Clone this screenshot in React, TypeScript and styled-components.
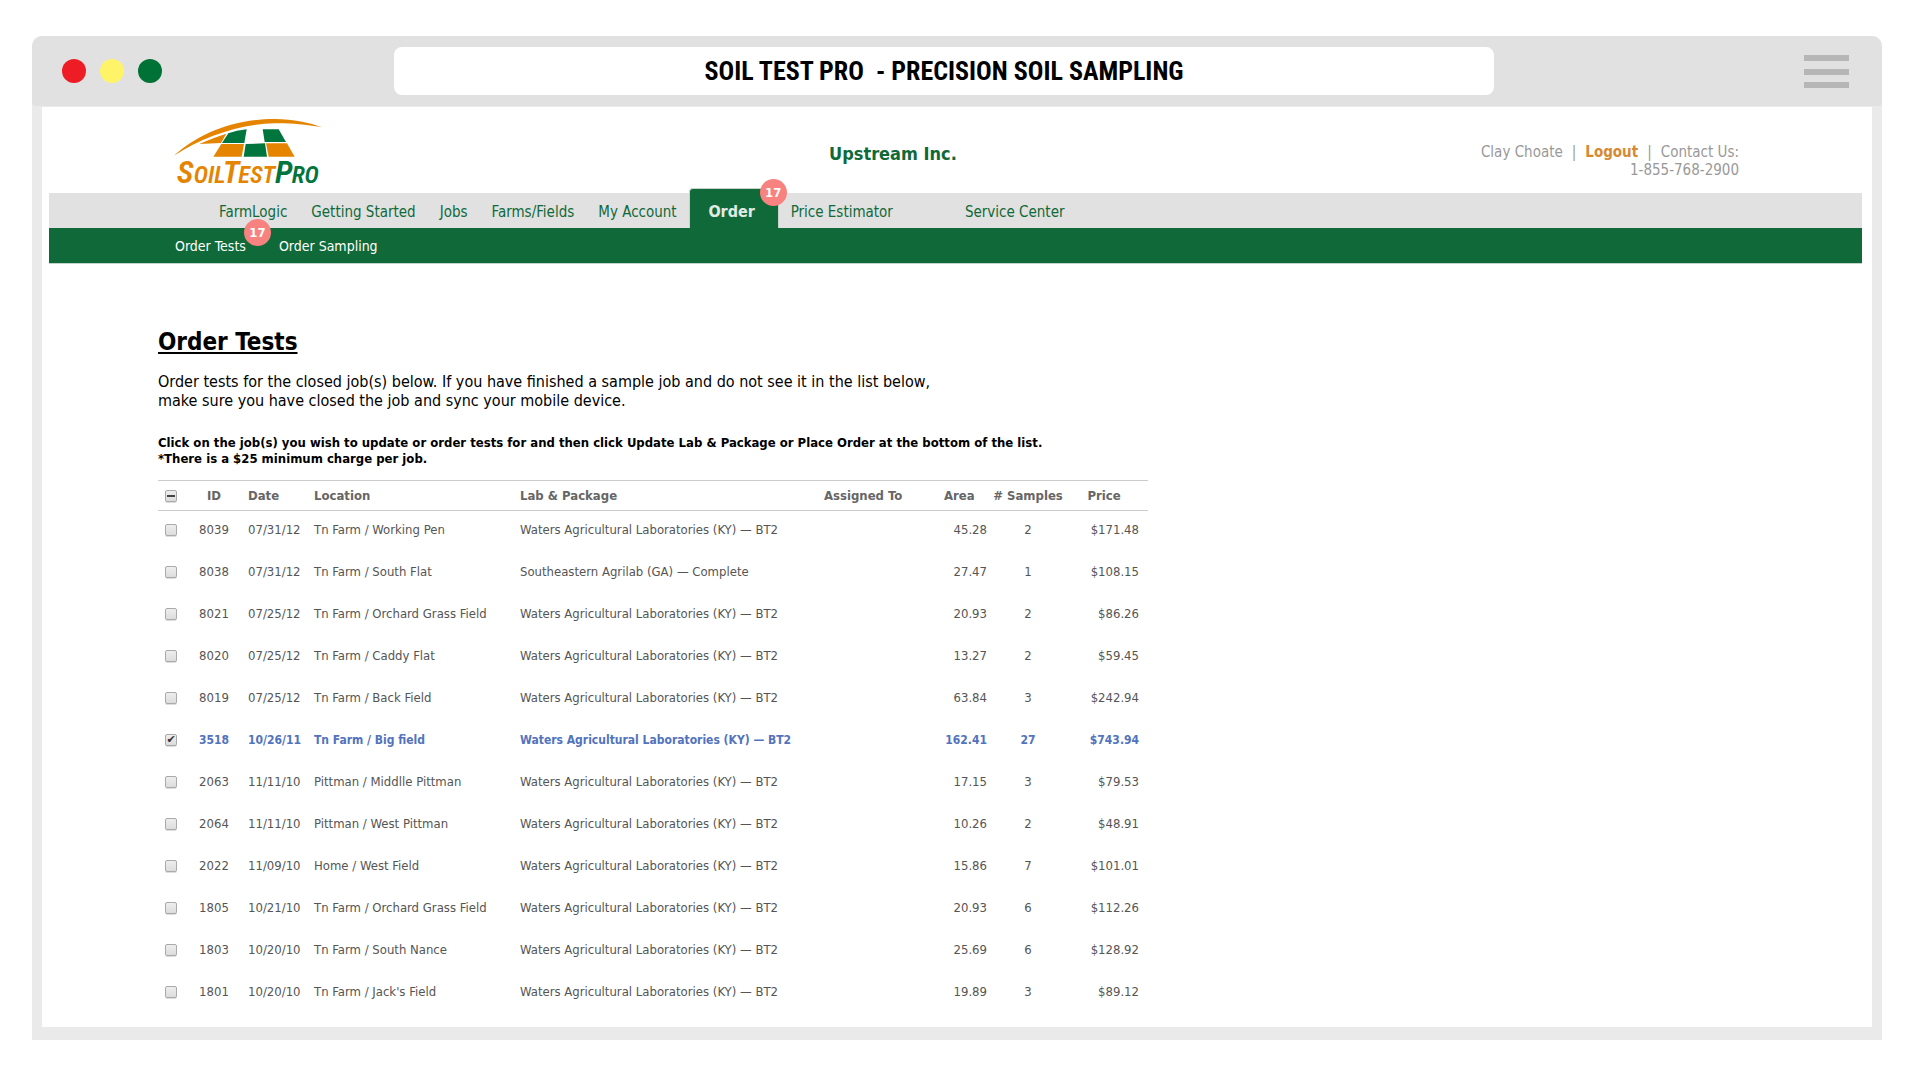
import React, { useEffect, useRef, useState } from "react";
import styled, { createGlobalStyle } from "styled-components";

const GREEN = "#106938";
const CHROME = "#e1e1e1";

const GlobalStyle = createGlobalStyle`
  * { box-sizing: border-box; }
  body {
    margin: 0;
    background: #fff;
    font-family: "DejaVu Sans Condensed", "DejaVu Sans", sans-serif;
  }
  a { color: inherit; text-decoration: none; }
`;

const Frame = styled.div`
  margin: 36px 38px 40px 32px;
  padding-bottom: 13px;
  background: #eaeaea;
  border-radius: 10px 10px 0 0;
`;

const TitleBar = styled.header`
  display: grid;
  grid-template-columns: 332px minmax(0, 1fr) 355px;
  align-items: center;
  height: 70px;
  padding: 0 33px 0 30px;
  background: ${CHROME};
  border-radius: 10px 10px 4px 4px;
`;

const Dots = styled.div`
  display: flex;
  gap: 14px;
`;

const Dot = styled.span<{ $color: string }>`
  width: 24px;
  height: 24px;
  border-radius: 50%;
  background: ${(p) => p.$color};
`;

const AddressBar = styled.div`
  display: flex;
  align-items: center;
  justify-content: center;
  height: 48px;
  background: #fff;
  border-radius: 8px;
  color: #000;
  font: 700 26px/32px "Roboto Condensed", Roboto, sans-serif;
  white-space: pre;
`;

const MenuButton = styled.button`
  justify-self: end;
  display: block;
  padding: 0;
  border: 0;
  background: none;
  svg { display: block; }
`;

const Page = styled.main`
  margin: 1px 10px 0;
  background: #fff;
`;

const SiteHeader = styled.div`
  display: grid;
  grid-template-columns: 655px auto 1fr;
  height: 86px;
  padding: 0 133px 0 132px;
`;

const LogoLink = styled.a`
  justify-self: start;
  padding-top: 11px;
  svg { display: block; margin-left: -1px; }
`;

const Company = styled.div`
  padding-top: 35px;
  color: ${GREEN};
  font-size: 18px;
  font-weight: 700;
  line-height: 24px;
`;

const Contact = styled.div`
  padding-top: 36px;
  color: #999;
  font-size: 15px;
  line-height: 18px;
  text-align: right;
`;

const Separator = styled.span`
  margin: 0 9px;
`;

const Logout = styled.a`
  color: #d68a33;
  font-weight: 700;
`;

const Bars = styled.div`
  margin: 0 10px 0 7px;
`;

const Nav = styled.nav`
  display: flex;
  height: 35px;
  padding-left: 158px;
  background: ${CHROME};
  color: ${GREEN};
  font-size: 15px;
  line-height: 38px;
`;

const NavItem = styled.a<{ $spaced?: boolean }>`
  padding: 0 12px;
  margin-left: ${(p) => (p.$spaced ? 48 : 0)}px;
  white-space: nowrap;
`;

const ActiveTab = styled.a`
  position: relative;
  width: 90px;
  height: 40px;
  margin-top: -5px;
  padding-top: 4px;
  border: 1px solid #c9d3cc;
  border-bottom: 0;
  border-radius: 4px 4px 0 0;
  background: ${GREEN};
  color: #e1ebe4;
  font-size: 16px;
  font-weight: 700;
  text-align: center;
  text-indent: -4px;
`;

const SubNav = styled.nav`
  display: flex;
  gap: 33px;
  height: 36px;
  padding-left: 126px;
  border-bottom: 1px solid #c3d3c9;
  background: ${GREEN};
  color: #fff;
  font-size: 14px;
  line-height: 36px;
`;

const SubNavItem = styled.a`
  position: relative;
`;

const Badge = styled.span`
  position: absolute;
  top: -9px;
  right: -25px;
  width: 27px;
  height: 27px;
  border-radius: 50%;
  background: #f88280;
  color: #fff;
  font-size: 13px;
  font-weight: 700;
  line-height: 27px;
  text-align: center;
  text-indent: 0;
`;

const TabBadge = styled(Badge)`
  top: -10px;
  right: -9px;
`;

const Content = styled.section`
  max-width: 1106px;
  padding: 62px 0 12px 116px;
`;

const Heading = styled.h1`
  margin: 0;
  font-size: 24px;
  line-height: 32px;
  text-decoration: underline;
  text-decoration-thickness: 2px;
  text-underline-offset: 2px;
  text-decoration-skip-ink: none;
`;

const Intro = styled.p`
  margin: 14px 0 0;
  font-size: 16px;
  line-height: 19px;
`;

const Note = styled.p`
  margin: 25px 0 0;
  font-size: 13px;
  font-weight: 700;
  line-height: 16px;
`;

const Table = styled.table`
  width: 100%;
  margin-top: 13px;
  border-collapse: separate;
  border-spacing: 0;
  table-layout: fixed;
  color: #555;
  font-size: 13px;
  line-height: 18px;
`;

type Align = "left" | "center" | "right";

const Th = styled.th<{ $align: Align; $end?: number }>`
  height: 31px;
  padding: 0 ${(p) => p.$end || 0}px 0 0;
  border-top: 1px solid #ccc;
  border-bottom: 1px solid #ccc;
  color: #666;
  text-align: ${(p) => p.$align};
  white-space: nowrap;
`;

const Td = styled.td<{ $align: Align; $end?: number }>`
  height: 42px;
  padding: 10px ${(p) => p.$end || 0}px 0 0;
  text-align: ${(p) => p.$align};
  vertical-align: top;
  white-space: nowrap;
`;

const CheckCell = styled(Td)`
  padding-top: 13px;
`;

const Row = styled.tr<{ $selected: boolean }>`
  color: ${(p) => (p.$selected ? "#5273bd" : "inherit")};
  font-size: ${(p) => (p.$selected ? 12 : 13)}px;
  font-weight: ${(p) => (p.$selected ? 700 : 400)};
`;

const Check = styled.input`
  appearance: none;
  display: block;
  width: 12px;
  height: 12px;
  margin: 0 0 0 7px;
  border: 1px solid #aaa;
  border-radius: 2px;
  background: linear-gradient(#eee, #dcdcdc);
  box-shadow: 0 1px 0 #ddd;
  &:checked::after {
    content: "✔";
    display: block;
    color: #333;
    font: 11px/10px "DejaVu Sans", sans-serif;
    text-align: center;
  }
  &:indeterminate::after {
    content: "";
    display: block;
    width: 8px;
    height: 2px;
    margin: 4px 1px;
    background: #444;
  }
`;

const Logo = () => (
  <svg width="150" height="74" viewBox="39 36 450 222" role="img" aria-label="Soil Test Pro">
    <g fill="#e58400">
      <path d="M42 149 C110 88 210 39 345 39 C400 40 450 50 486 64 C430 55 390 51 345 52 C240 54 130 92 42 149Z" />
      <path d="M118 114 Q165 93 199 83 L183 111Z" />
      <path d="M184 114 H252 L245 152 H160Z" />
      <path d="M318 112 H381 L404 152 H326Z" />
    </g>
    <g fill="#00753d">
      <path d="M205 82 Q230 73 260 70 L253 111 H186Z" />
      <path d="M257 114 L315 112 L321 152 H251Z" />
      <path d="M308 70 H356 L378 108 H314Z" />
    </g>
    <g fontFamily="Roboto Condensed, Roboto, sans-serif" fontWeight="600" fontStyle="italic">
      <text y="230" fill="#e58400">
        <tspan x="50" fontSize="96">S</tspan>
        <tspan x="101" fontSize="73">OIL</tspan>
        <tspan x="188" fontSize="96">T</tspan>
        <tspan x="235" fontSize="73">EST</tspan>
      </text>
      <text y="230" fill="#00753d">
        <tspan x="345" fontSize="96">P</tspan>
        <tspan x="395" fontSize="73">RO</tspan>
      </text>
    </g>
  </svg>
);

const WATERS = "Waters Agricultural Laboratories (KY) — BT2";

const JOBS = [
  ["8039", "07/31/12", "Tn Farm / Working Pen", WATERS, "45.28", "2", "$171.48"],
  ["8038", "07/31/12", "Tn Farm / South Flat", "Southeastern Agrilab (GA) — Complete", "27.47", "1", "$108.15"],
  ["8021", "07/25/12", "Tn Farm / Orchard Grass Field", WATERS, "20.93", "2", "$86.26"],
  ["8020", "07/25/12", "Tn Farm / Caddy Flat", WATERS, "13.27", "2", "$59.45"],
  ["8019", "07/25/12", "Tn Farm / Back Field", WATERS, "63.84", "3", "$242.94"],
  ["3518", "10/26/11", "Tn Farm / Big field", WATERS, "162.41", "27", "$743.94"],
  ["2063", "11/11/10", "Pittman / Middlle Pittman", WATERS, "17.15", "3", "$79.53"],
  ["2064", "11/11/10", "Pittman / West Pittman", WATERS, "10.26", "2", "$48.91"],
  ["2022", "11/09/10", "Home / West Field", WATERS, "15.86", "7", "$101.01"],
  ["1805", "10/21/10", "Tn Farm / Orchard Grass Field", WATERS, "20.93", "6", "$112.26"],
  ["1803", "10/20/10", "Tn Farm / South Nance", WATERS, "25.69", "6", "$128.92"],
  ["1801", "10/20/10", "Tn Farm / Jack's Field", WATERS, "19.89", "3", "$89.12"],
];

const Col = styled.col<{ $width: number }>`
  width: ${(p) => p.$width}px;
`;

const COLUMN_WIDTHS = [22, 68, 66, 206, 304, 120, 43, 82, 79];

export default function App() {
  const [selected, setSelected] = useState<string[]>(["3518"]);
  const allRef = useRef<HTMLInputElement>(null);
  const all = selected.length === JOBS.length;

  useEffect(() => {
    if (allRef.current) allRef.current.indeterminate = selected.length > 0 && !all;
  }, [selected, all]);

  const toggle = (id: string) =>
    setSelected((ids) => (ids.includes(id) ? ids.filter((x) => x !== id) : [...ids, id]));

  return (
    <>
      <GlobalStyle />
      <Frame>
        <TitleBar>
          <Dots>
            <Dot $color="#ee1c25" />
            <Dot $color="#fff467" />
            <Dot $color="#007236" />
          </Dots>
          <AddressBar>{"SOIL TEST PRO  - PRECISION SOIL SAMPLING"}</AddressBar>
          <MenuButton type="button" aria-label="Menu">
            <svg width="45" height="33" viewBox="0 0 45 33" fill="#b6b6b6">
              <rect width="45" height="6" />
              <rect y="14" width="45" height="6" />
              <rect y="27" width="45" height="6" />
            </svg>
          </MenuButton>
        </TitleBar>
        <Page>
          <SiteHeader>
            <LogoLink href="#home"><Logo /></LogoLink>
            <Company>Upstream Inc.</Company>
            <Contact>
              Clay Choate<Separator>|</Separator>
              <Logout href="#logout">Logout</Logout>
              <Separator>|</Separator>Contact Us:
              <br />
              1-855-768-2900
            </Contact>
          </SiteHeader>
          <Bars>
            <Nav>
              <NavItem href="#farmlogic">FarmLogic</NavItem>
              <NavItem href="#start">Getting Started</NavItem>
              <NavItem href="#jobs">Jobs</NavItem>
              <NavItem href="#farms">Farms/Fields</NavItem>
              <NavItem href="#account">My Account</NavItem>
              <ActiveTab href="#order">
                Order<TabBadge>17</TabBadge>
              </ActiveTab>
              <NavItem href="#price">Price Estimator</NavItem>
              <NavItem href="#service" $spaced>Service Center</NavItem>
            </Nav>
            <SubNav>
              <SubNavItem href="#tests">
                Order Tests<Badge>17</Badge>
              </SubNavItem>
              <SubNavItem href="#sampling">Order Sampling</SubNavItem>
            </SubNav>
          </Bars>
          <Content>
            <Heading>Order Tests</Heading>
            <Intro>
              Order tests for the closed job(s) below. If you have finished a sample job and do not see it in the list below,
              <br />
              make sure you have closed the job and sync your mobile device.
            </Intro>
            <Note>
              Click on the job(s) you wish to update or order tests for and then click Update Lab &amp; Package or Place Order at the bottom of the list.
              <br />
              *There is a $25 minimum charge per job.
            </Note>
            <Table>
              <colgroup>
                {COLUMN_WIDTHS.map((w, i) => <Col key={i} $width={w} />)}
              </colgroup>
              <thead>
                <tr>
                  <Th $align="left">
                    <Check
                      ref={allRef}
                      type="checkbox"
                      aria-label="Select all jobs"
                      checked={all}
                      onChange={() => setSelected(all ? [] : JOBS.map((j) => j[0]))}
                    />
                  </Th>
                  <Th $align="center">ID</Th>
                  <Th $align="left">Date</Th>
                  <Th $align="left">Location</Th>
                  <Th $align="left">Lab &amp; Package</Th>
                  <Th $align="left">Assigned To</Th>
                  <Th $align="left">Area</Th>
                  <Th $align="center"># Samples</Th>
                  <Th $align="center" $end={9}>Price</Th>
                </tr>
              </thead>
              <tbody>
                {JOBS.map(([id, date, location, lab, area, samples, price]) => (
                  <Row key={id} $selected={selected.includes(id)}>
                    <CheckCell $align="left">
                      <Check
                        type="checkbox"
                        aria-label={`Select job ${id}`}
                        checked={selected.includes(id)}
                        onChange={() => toggle(id)}
                      />
                    </CheckCell>
                    <Td $align="center">{id}</Td>
                    <Td $align="left">{date}</Td>
                    <Td $align="left">{location}</Td>
                    <Td $align="left">{lab}</Td>
                    <Td $align="left" />
                    <Td $align="right">{area}</Td>
                    <Td $align="center">{samples}</Td>
                    <Td $align="right" $end={9}>{price}</Td>
                  </Row>
                ))}
              </tbody>
            </Table>
          </Content>
        </Page>
      </Frame>
    </>
  );
}
